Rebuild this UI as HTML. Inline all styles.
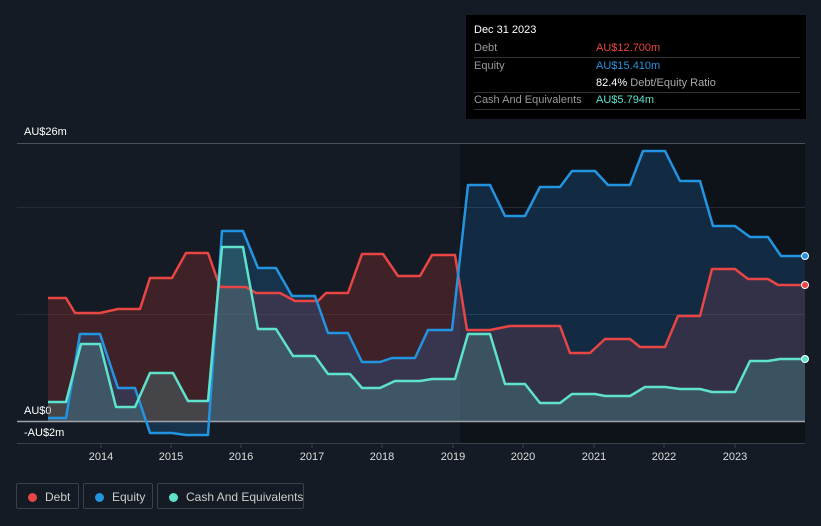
<!DOCTYPE html>
<html><head><meta charset="utf-8"><style>
html,body{margin:0;background:#151b24;width:821px;height:526px;overflow:hidden;font-family:"Liberation Sans",sans-serif;}
.tt{position:absolute;left:466px;top:15px;width:340px;height:104px;background:#000;color:#fff;font-size:11px;}
.tt .r{position:absolute;left:8px;right:6px;height:17px;line-height:17px;border-bottom:1px solid #333;}
.tt .l{color:#999;}
.tt .v{position:absolute;left:122px;top:0;}
.leg{position:absolute;top:483px;height:26px;border:1px solid #3a414c;border-radius:2px;color:#ccc;font-size:12px;line-height:26px;box-sizing:border-box;white-space:nowrap;}
.leg i{position:absolute;left:11px;top:9px;width:9px;height:9px;border-radius:50%;}
.leg span{position:absolute;left:28px;top:0;}
</style></head><body>
<svg width="821" height="526" style="position:absolute;left:0;top:0">
<rect x="460" y="143" width="345" height="300" fill="#0e1219"/>
<line x1="17" y1="143.5" x2="805" y2="143.5" stroke="#4a505a"/>
<line x1="17" y1="207.5" x2="805" y2="207.5" stroke="#262c36"/>
<line x1="17" y1="314.5" x2="805" y2="314.5" stroke="#262c36"/>
<line x1="17" y1="443.5" x2="805" y2="443.5" stroke="#3a404a"/>
<g font-size="11" fill="#fff">
<text x="24" y="135">AU$26m</text>
<text x="24" y="414">AU$0</text>
<text x="24" y="436">-AU$2m</text>
<g text-anchor="middle" fill="#ddd">
<text x="101" y="460">2014</text><text x="171" y="460">2015</text><text x="241" y="460">2016</text><text x="312" y="460">2017</text><text x="382" y="460">2018</text><text x="453" y="460">2019</text><text x="523" y="460">2020</text><text x="594" y="460">2021</text><text x="664" y="460">2022</text><text x="735" y="460">2023</text>
</g></g>
<g stroke="#3a404a"><line x1="101" y1="443" x2="101" y2="448"/><line x1="171" y1="443" x2="171" y2="448"/><line x1="241" y1="443" x2="241" y2="448"/><line x1="312" y1="443" x2="312" y2="448"/><line x1="382" y1="443" x2="382" y2="448"/><line x1="453" y1="443" x2="453" y2="448"/><line x1="523" y1="443" x2="523" y2="448"/><line x1="594" y1="443" x2="594" y2="448"/><line x1="664" y1="443" x2="664" y2="448"/><line x1="735" y1="443" x2="735" y2="448"/></g>
<g stroke-linejoin="round" stroke-width="2.5">
<polygon fill="rgba(190,50,50,0.25)" stroke="none" points="48,421 48,298 66,298 75,313 100,313 118,309 140,309 150,278 172,278 186,253 208,253 220,287 246,287 256,293 280,293 295,301 318,301 326,293 348,293 362,254 383,254 398,276 420,276 432,255 455,255 467,330 490,330 510,326 560,326 570,353 590,353 605,339 630,339 640,347 665,347 678,316 700,316 712,269 735,269 748,279 768,279 778,285 805,285 805,421"/>
<polygon fill="rgba(30,120,190,0.25)" stroke="none" points="48,421 48,418 66,418 80,334 100,334 118,388 135,388 150,433 172,433 186,435 208,435 222,231 243,231 258,268 276,268 292,296 315,296 328,333 348,333 362,362 380,362 392,358 415,358 428,330 452,330 468,185 490,185 505,216 525,216 540,187 560,187 572,171 595,171 608,185 630,185 643,151 665,151 680,181 700,181 713,226 735,226 750,237 768,237 781,256 805,256 805,421"/>
<polygon fill="rgba(90,200,190,0.22)" stroke="none" points="48,421 48,402 66,402 81,344 100,344 116,407 135,407 150,373 173,373 188,401 208,401 222,247 243,247 258,329 276,329 293,356 315,356 328,374 350,374 362,388 380,388 395,381 420,381 432,379 455,379 468,334 490,334 505,384 525,384 540,403 560,403 572,394 595,394 605,396 630,396 645,387 665,387 680,389 700,389 712,392 735,392 750,361 768,361 780,359 805,359 805,421"/>
<line x1="17" y1="421.5" x2="805" y2="421.5" stroke="#a0a4aa" stroke-width="1.5"/>
<polyline fill="none" stroke="#e84545" points="48,298 66,298 75,313 100,313 118,309 140,309 150,278 172,278 186,253 208,253 220,287 246,287 256,293 280,293 295,301 318,301 326,293 348,293 362,254 383,254 398,276 420,276 432,255 455,255 467,330 490,330 510,326 560,326 570,353 590,353 605,339 630,339 640,347 665,347 678,316 700,316 712,269 735,269 748,279 768,279 778,285 805,285"/>
<polyline fill="none" stroke="#2394e0" points="48,418 66,418 80,334 100,334 118,388 135,388 150,433 172,433 186,435 208,435 222,231 243,231 258,268 276,268 292,296 315,296 328,333 348,333 362,362 380,362 392,358 415,358 428,330 452,330 468,185 490,185 505,216 525,216 540,187 560,187 572,171 595,171 608,185 630,185 643,151 665,151 680,181 700,181 713,226 735,226 750,237 768,237 781,256 805,256"/>
<polyline fill="none" stroke="#5ee2cc" points="48,402 66,402 81,344 100,344 116,407 135,407 150,373 173,373 188,401 208,401 222,247 243,247 258,329 276,329 293,356 315,356 328,374 350,374 362,388 380,388 395,381 420,381 432,379 455,379 468,334 490,334 505,384 525,384 540,403 560,403 572,394 595,394 605,396 630,396 645,387 665,387 680,389 700,389 712,392 735,392 750,361 768,361 780,359 805,359"/>
</g>
<circle cx="805" cy="256" r="3.5" fill="#2394e0" stroke="#fff" stroke-width="1"/>
<circle cx="805" cy="285" r="3.5" fill="#e84545" stroke="#fff" stroke-width="1"/>
<circle cx="805" cy="359" r="3.5" fill="#5ee2cc" stroke="#fff" stroke-width="1"/>
</svg>
<div class="tt">
<div style="position:absolute;left:8px;top:9px;font-size:11px">Dec 31 2023</div>
<div class="r" style="top:25px"><span class="l">Debt</span><span class="v" style="color:#e84545">AU$12.700m</span></div>
<div class="r" style="top:43px;border:none"><span class="l">Equity</span><span class="v" style="color:#2394e0">AU$15.410m</span></div>
<div class="r" style="top:60px"><span class="v"><b style="font-weight:normal;color:#fff">82.4%</b> <span style="color:#aaa">Debt/Equity Ratio</span></span></div>
<div class="r" style="top:77px"><span class="l">Cash And Equivalents</span><span class="v" style="color:#5ee2cc">AU$5.794m</span></div>
</div>
<div class="leg" style="left:16px;width:63px"><i style="background:#e84545"></i><span>Debt</span></div>
<div class="leg" style="left:83px;width:70px"><i style="background:#2394e0"></i><span>Equity</span></div>
<div class="leg" style="left:157px;width:147px"><i style="background:#5ee2cc"></i><span>Cash And Equivalents</span></div>
</body></html>
